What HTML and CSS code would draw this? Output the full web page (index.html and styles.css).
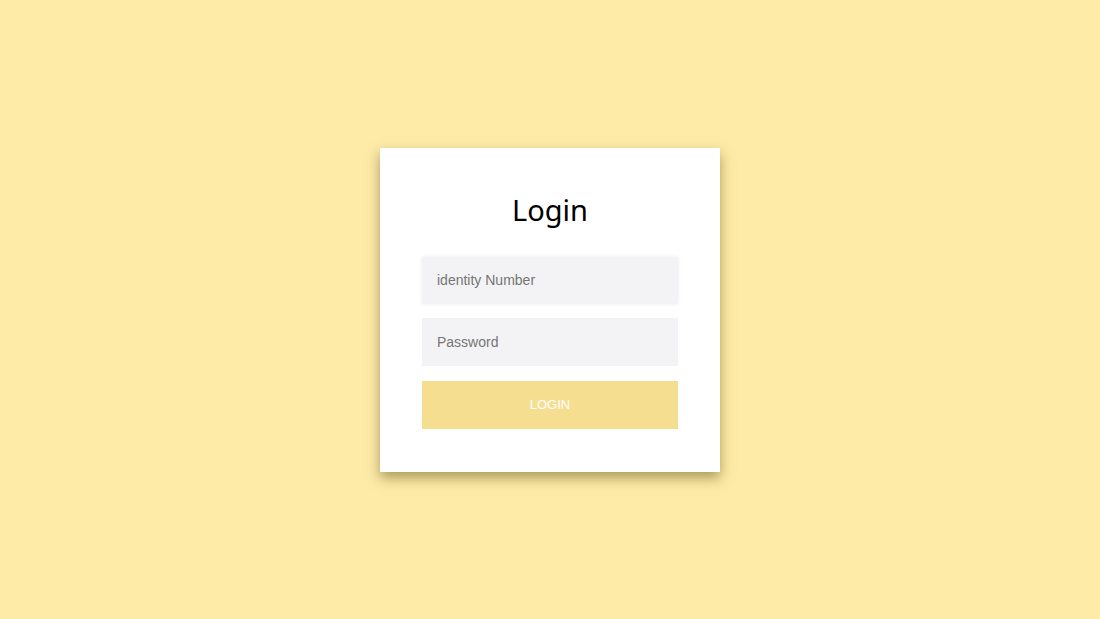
FILE: index.html
```html
<!DOCTYPE html>
<html lang="en">
<head>
<meta charset="utf-8">
<title>Login</title>
<link rel="stylesheet" href="styles.css">
</head>
<body>
<main class="page">
  <form class="card">
    <h1 class="title">Login</h1>
    <input class="field field-focus" type="text" placeholder="identity Number">
    <input class="field" type="password" placeholder="Password">
    <button class="btn" type="button">LOGIN</button>
  </form>
</main>
</body>
</html>
```

FILE: styles.css
```css
html, body {
  margin: 0;
  padding: 0;
  height: 100%;
}
body {
  background: #feeba8;
  font-family: "Liberation Sans", Arial, sans-serif;
}
.page {
  height: 100%;
  display: flex;
  align-items: center;
  justify-content: center;
}
.card {
  box-sizing: border-box;
  width: 340px;
  height: 324px;
  background: #ffffff;
  padding: 42px 42px 43px;
  display: flex;
  flex-direction: column;
  box-shadow: 0 6px 12px rgba(90, 75, 20, 0.5);
}
.title {
  margin: 0 0 27px;
  font-family: "Noto Sans", "Open Sans", sans-serif;
  font-weight: 400;
  font-size: 29px;
  line-height: 40px;
  text-align: center;
  color: #000;
}
.field {
  box-sizing: border-box;
  height: 48px;
  width: 100%;
  border: none;
  outline: none;
  background: #f3f2f4;
  padding: 0 15px;
  font-family: "Liberation Sans", Arial, sans-serif;
  font-size: 14px;
  color: #333;
  margin: 0 0 14px;
}
.field::placeholder {
  color: #767676;
}
.field-focus {
  box-shadow: 0 0 4px rgba(0, 0, 0, 0.08);
}
.btn {
  height: 48px;
  width: 100%;
  border: none;
  background: #f5de8f;
  color: #ffffff;
  font-family: "Liberation Sans", Arial, sans-serif;
  font-size: 13px;
  margin-top: 1px;
  padding: 0;
}
```
